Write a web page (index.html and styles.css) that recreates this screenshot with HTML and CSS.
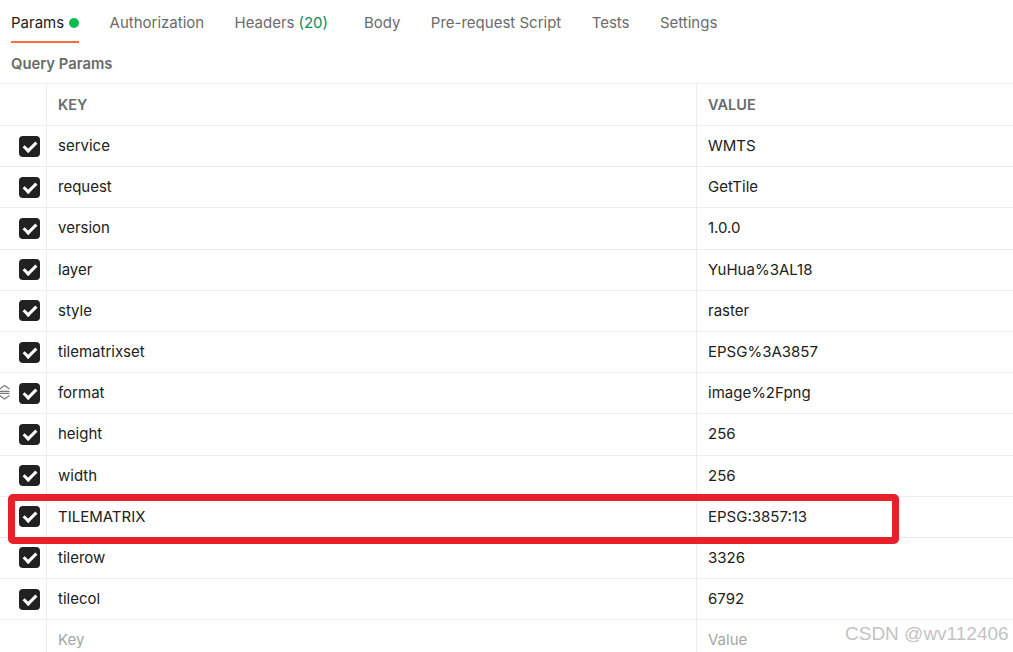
FILE: index.html
```html
<!DOCTYPE html>
<html>
<head>
<meta charset="utf-8">
<link rel="stylesheet" href="styles.css">
</head>
<body>
<div class="page">
  <nav class="tabs">
    <div class="tab active">Params <span class="dot"></span></div>
    <div class="tab">Authorization</div>
    <div class="tab">Headers <span class="count">(20)</span></div>
    <div class="tab body-tab">Body</div>
    <div class="tab">Pre-request Script</div>
    <div class="tab">Tests</div>
    <div class="tab">Settings</div>
  </nav>
  <div class="section-title">Query Params</div>
  <div class="table">
    <div class="row head">
      <div class="c-check"></div>
      <div class="c-key">KEY</div>
      <div class="c-val">VALUE</div>
    </div>
    <div class="row"><div class="c-check"><span class="cb"></span></div><div class="c-key">service</div><div class="c-val">WMTS</div></div>
    <div class="row"><div class="c-check"><span class="cb"></span></div><div class="c-key">request</div><div class="c-val">GetTile</div></div>
    <div class="row"><div class="c-check"><span class="cb"></span></div><div class="c-key">version</div><div class="c-val">1.0.0</div></div>
    <div class="row"><div class="c-check"><span class="cb"></span></div><div class="c-key">layer</div><div class="c-val">YuHua%3AL18</div></div>
    <div class="row"><div class="c-check"><span class="cb"></span></div><div class="c-key">style</div><div class="c-val">raster</div></div>
    <div class="row"><div class="c-check"><span class="cb"></span></div><div class="c-key">tilematrixset</div><div class="c-val">EPSG%3A3857</div></div>
    <div class="row"><div class="c-check"><span class="drag"><svg width="11" height="16" viewBox="0 0 11 16"><path d="M0.5 5 L5.5 1.5 L10.5 5 M0.5 7.3 H10.5 M0.5 9.3 H10.5 M0.5 11.5 L5.5 15 L10.5 11.5" fill="none" stroke="#7a7a7a" stroke-width="1.2"/></svg></span><span class="cb"></span></div><div class="c-key">format</div><div class="c-val">image%2Fpng</div></div>
    <div class="row"><div class="c-check"><span class="cb"></span></div><div class="c-key">height</div><div class="c-val">256</div></div>
    <div class="row"><div class="c-check"><span class="cb"></span></div><div class="c-key">width</div><div class="c-val">256</div></div>
    <div class="row"><div class="c-check"><span class="cb"></span></div><div class="c-key">TILEMATRIX</div><div class="c-val">EPSG:3857:13</div></div>
    <div class="row"><div class="c-check"><span class="cb"></span></div><div class="c-key">tilerow</div><div class="c-val">3326</div></div>
    <div class="row"><div class="c-check"><span class="cb"></span></div><div class="c-key">tilecol</div><div class="c-val">6792</div></div>
    <div class="row"><div class="c-check"></div><div class="c-key ph">Key</div><div class="c-val ph">Value</div></div>
  </div>
  <div class="highlight"></div>
  <div class="watermark">CSDN @wv112406</div>
</div>
</body>
</html>
```
FILE: styles.css
```css
* { box-sizing: border-box; }
html, body { margin: 0; padding: 0; background: #fff; }
body { font-family: Inter, "Noto Sans", sans-serif; font-size: 15px; color: #212121; overflow: hidden; }
.page { position: relative; width: 1013px; height: 652px; overflow: hidden; }
.tabs { display: flex; gap: 30.4px; padding: 0 0 0 11px; height: 43px; }
.tab { font-size: 15px; color: #6b6b6b; padding-top: 13px; height: 43px; display: flex; align-items: flex-start; gap: 5px; white-space: nowrap; }
.tab.active { color: #212121; border-bottom: 2px solid #ff6c37; }
.body-tab { margin-left: 5.5px; }
.dot { width: 10px; height: 10px; border-radius: 50%; background: #0cbb52; margin-top: 5px; }
.count { color: #0c8a5f; margin-left: -1px; }
.section-title { font-weight: 600; color: #6b6b6b; font-size: 14.8px; padding: 12px 0 0 11px; height: 40px; }
.table { border-top: 1px solid #ededed; }
.row { display: flex; height: 41.2px; border-bottom: 1px solid #ededed; align-items: stretch; }
.row.head { height: 42px; }
.c-check { width: 47px; border-right: 1px solid #ededed; position: relative; display: flex; align-items: center; justify-content: flex-end; padding-right: 6px; }
.c-key { width: 650px; border-right: 1px solid #ededed; padding-left: 11px; display: flex; align-items: center; padding-bottom: 1px; }
.c-val { flex: 1; padding-left: 11px; display: flex; align-items: center; padding-bottom: 1px; }
.head .c-key, .head .c-val { font-weight: 600; color: #6b6b6b; font-size: 14.5px; }
.ph { color: #a6a6a6; }
.cb { width: 21px; height: 21px; border-radius: 4px; background: #212121; position: relative; }
.cb::after { content: ""; position: absolute; left: 7px; top: 3px; width: 5px; height: 10px; border: solid #fff; border-width: 0 3px 3px 0; transform: rotate(45deg); }
.drag { position: absolute; left: -1px; top: 11px; display: block; line-height: 0; }
.highlight { position: absolute; left: 8px; top: 494px; width: 891px; height: 50px; border: 7px solid #e8202a; border-radius: 5px; }
.watermark { position: absolute; left: 845px; top: 623px; font-family: "Liberation Sans", Arial, sans-serif; font-size: 19px; color: #bdbdbd; opacity: 0.9; }
```
